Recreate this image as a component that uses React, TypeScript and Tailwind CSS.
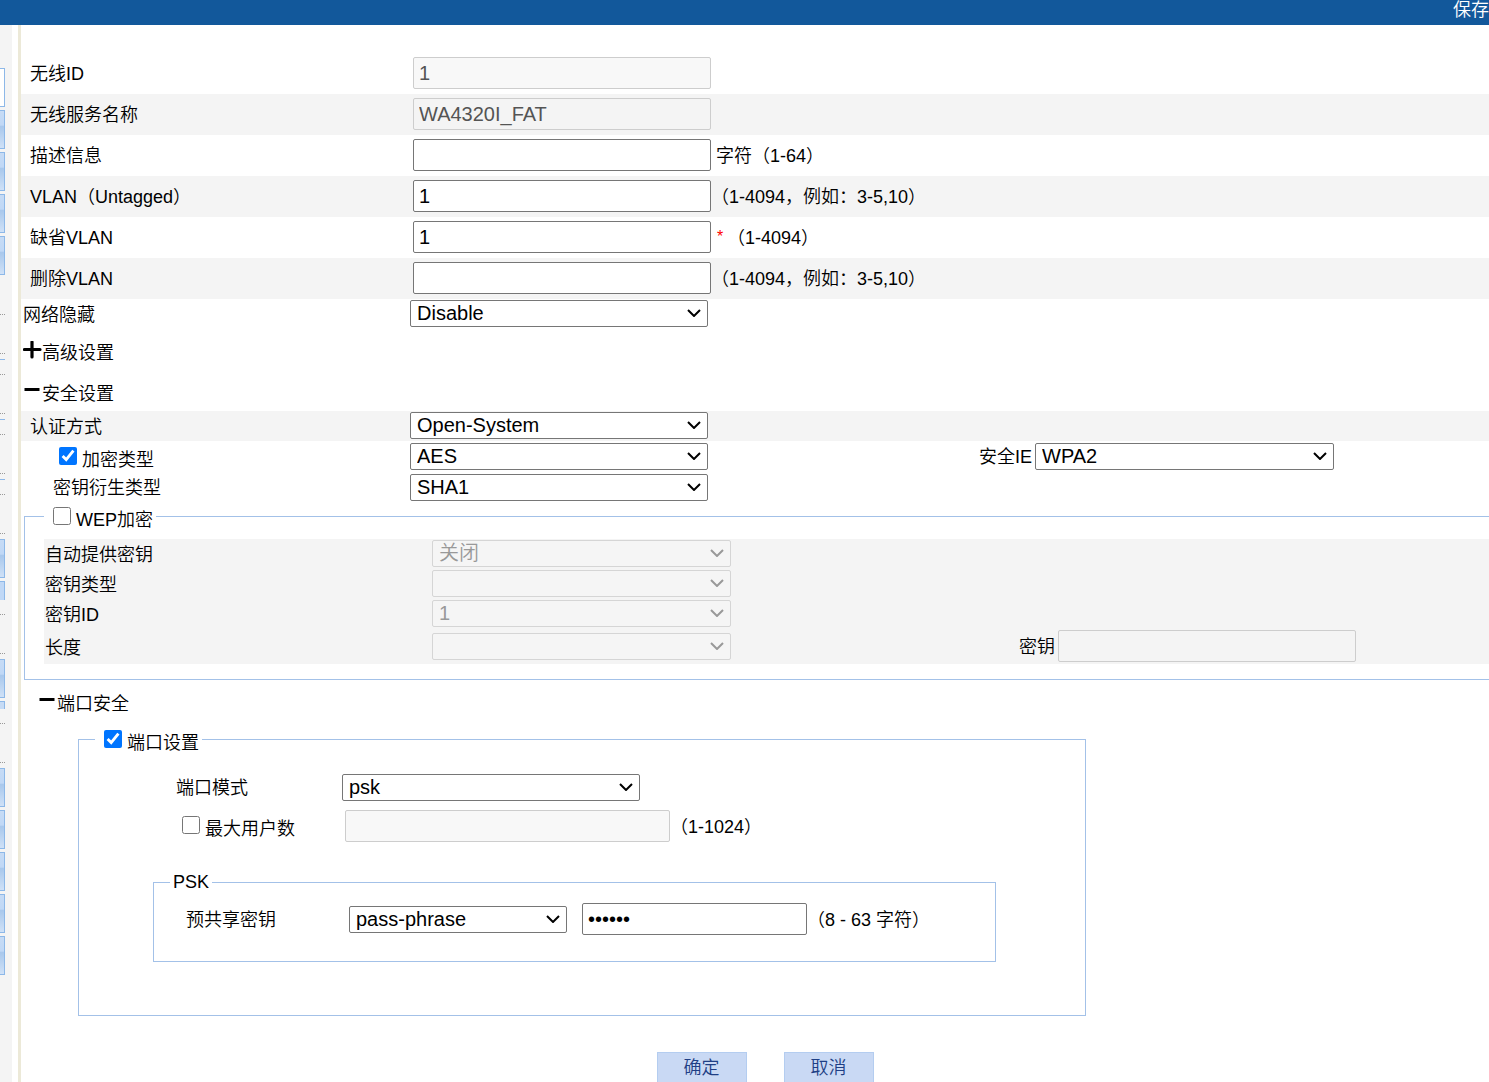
import { useState } from 'react';
import type { ReactNode } from 'react';

const inputBase =
  'h-8 shrink-0 rounded-xs border px-[5px] text-[20px] outline-none border-[#767676] text-black disabled:border-[#cdcdcd] disabled:text-[#545454]';
const onWhite = 'bg-white disabled:bg-[#f8f8f8]';
const onGrey = 'bg-white disabled:bg-[#f4f4f4]';

/* ─── Small building blocks ─── */

type SelectProps = {
  id: string;
  options: string[];
  width?: string;
  disabled?: boolean;
  label?: string;
};

function Select({ id, options, width = 'w-[298px]', disabled, label }: SelectProps) {
  return (
    <div className={`relative shrink-0 ${width}`}>
      <select
        id={id}
        aria-label={label}
        disabled={disabled}
        className="block h-[27px] w-full appearance-none rounded-xs border border-[#767676] bg-white pr-6 pl-[6px] text-[20px] leading-[25px] text-black disabled:border-[#d5d5d5] disabled:bg-[#f5f5f5] disabled:text-[#999999] disabled:opacity-100"
      >
        {options.map(o => <option key={o}>{o}</option>)}
      </select>
      <svg
        viewBox="0 0 14 8"
        className={`pointer-events-none absolute top-[9px] right-[7px] h-2 w-[14px] ${disabled ? 'text-[#999999]' : 'text-black'}`}
        fill="none"
        stroke="currentColor"
        strokeWidth="2"
      >
        <path d="M1 1 L7 7 L13 1" />
      </svg>
    </div>
  );
}

function Check({ id, label, defaultChecked }: { id: string; label: string; defaultChecked?: boolean }) {
  const [checked, setChecked] = useState(!!defaultChecked);
  return (
    <span className="flex items-start gap-[5px]">
      <input
        id={id}
        type="checkbox"
        className="size-[18px] shrink-0"
        checked={checked}
        onChange={e => setChecked(e.target.checked)}
      />
      <label htmlFor={id} className="pt-1 leading-[18px]">{label}</label>
    </span>
  );
}

function Toggle({ open, children }: { open?: boolean; children: ReactNode }) {
  return (
    <button type="button" className="flex items-start" aria-expanded={!!open}>
      <svg viewBox="0 0 19 19" className="size-[19px]" stroke="#000" strokeWidth="3">
        {open ? <path d="M1.5 7.5 H16.5" /> : <path d="M1.5 8.5 H17 M9 1 V16" strokeWidth="3.2" strokeLinecap="round" />}
      </svg>
      <span className="pt-[3px] leading-[18px]">{children}</span>
    </button>
  );
}

function Row({ id, label, striped, children }: { id: string; label: string; striped?: boolean; children: ReactNode }) {
  return (
    <div className={`flex h-[41px] items-center pb-px ${striped ? 'bg-[#f4f4f4]' : ''}`}>
      <label htmlFor={id} className="w-[392px] shrink-0 pt-px pl-[9px]">{label}</label>
      {children}
    </div>
  );
}

function WepRow({ id, label, options, tall, children }: { id: string; label: string; options: string[]; tall?: boolean; children?: ReactNode }) {
  return (
    <div className={`flex items-center bg-[#f4f4f4] pb-px ${tall ? 'h-[35px]' : 'h-[30px]'}`}>
      <label htmlFor={id} className="w-[388px] shrink-0 pt-[3px] pl-px">{label}</label>
      <Select id={id} options={options} width="w-[299px]" disabled />
      {children}
    </div>
  );
}

/* ─── Sidebar edge ─── */

const navItem = 'h-[39px] shrink-0 border border-l-0 border-[#8db8e8] bg-[linear-gradient(#c6dbf5_0%,#c0d8f6_38%,#a9c8ec_42%,#cfe1f7_100%)]';
const navBox = 'h-10 shrink-0 border-y border-dotted border-[#999999]';
const navLine = 'mt-[5px] mb-[14px] h-px shrink-0 bg-[#8db8e8]';

function Sidebar() {
  return (
    <aside className="flex w-3 shrink-0 flex-col bg-[#f4f4f4] pt-[43px] pr-[7px]">
      <div className="flex flex-col gap-[3px]">
        <div className="h-[39px] border border-l-0 border-[#8db8e8] bg-white" />
        {[1, 2, 3, 4].map(n => <div key={n} className={navItem} />)}
      </div>
      <div className="mt-[39px] flex flex-col">
        {[1, 2, 3].map(n => (
          <div key={n}>
            <div className={navBox} />
            <div className={navLine} />
          </div>
        ))}
        <div className={navBox} />
      </div>
      <div className={`mt-[5px] ${navItem}`} />
      <div className="mt-[3px] mb-[14px] h-[19px] border-t border-r border-[#8db8e8] bg-[#c0d8f6]" />
      <div className={navBox} />
      <div className={`mt-[5px] ${navItem}`} />
      <div className="mt-[3px] mb-[14px] h-2 border-t border-r border-[#8db8e8] bg-[#c6dbf5]" />
      <div className={navBox} />
      <div className="mt-[5px] flex flex-col gap-[3px]">
        {[1, 2, 3, 4, 5].map(n => <div key={n} className={navItem} />)}
      </div>
    </aside>
  );
}

export default function App() {
  return (
    <div className="flex min-h-screen flex-col overflow-hidden bg-white font-['Liberation_Sans','Noto_Sans_CJK_SC',sans-serif] text-[18px] leading-[22px] font-[350] text-black">
      <header className="flex h-[25px] shrink-0 justify-end bg-[#12589b]">
        <a href="#save" className="h-5 leading-5 whitespace-nowrap text-white">保存</a>
      </header>

      <div className="flex grow">
        <Sidebar />

        <main className="ml-[6px] min-w-0 grow border-l-[3px] border-[#ece9d8] pt-7">
          <form onSubmit={e => e.preventDefault()}>
            {/* Basic settings */}
            <Row id="wid" label="无线ID">
              <input id="wid" className={`${inputBase} ${onWhite} w-[298px]`} defaultValue="1" disabled />
            </Row>
            <Row id="ssid" label="无线服务名称" striped>
              <input id="ssid" className={`${inputBase} ${onGrey} w-[298px]`} defaultValue="WA4320I_FAT" disabled />
            </Row>
            <Row id="desc" label="描述信息">
              <input id="desc" className={`${inputBase} ${onWhite} w-[298px]`} />
              <span className="pt-px pl-[5px]">字符（1-64）</span>
            </Row>
            <Row id="vlan" label="VLAN（Untagged）" striped>
              <input id="vlan" className={`${inputBase} ${onGrey} w-[298px]`} defaultValue="1" />
              <span className="pt-px">（1-4094，例如：3-5,10）</span>
            </Row>
            <Row id="pvid" label="缺省VLAN">
              <input id="pvid" className={`${inputBase} ${onWhite} w-[298px]`} defaultValue="1" />
              <span className="w-4 pl-[6px] text-base text-[#ff0000]">*</span>
              <span className="pt-px">（1-4094）</span>
            </Row>
            <Row id="delvlan" label="删除VLAN" striped>
              <input id="delvlan" className={`${inputBase} ${onGrey} w-[298px]`} />
              <span className="pt-px">（1-4094，例如：3-5,10）</span>
            </Row>
            <div className="flex h-[30px] items-center pb-px">
              <label htmlFor="hide" className="w-[389px] shrink-0 pt-[3px] pl-[2px]">网络隐藏</label>
              <Select id="hide" options={['Disable', 'Enable']} />
            </div>

            <div className="flex h-[41px] items-center pt-[3px] pl-[2px]">
              <Toggle>高级设置</Toggle>
            </div>
            <div className="flex h-[41px] items-center pt-[3px] pl-[2px]">
              <Toggle open>安全设置</Toggle>
            </div>

            {/* Security */}
            <div className="flex h-[30px] items-center bg-[#f4f4f4] pb-px">
              <label htmlFor="auth" className="w-[389px] shrink-0 pt-[3px] pl-[9px]">认证方式</label>
              <Select id="auth" options={['Open-System', 'Shared-Key']} />
            </div>
            <div className="flex h-[31px] items-center">
              <div className="w-[389px] shrink-0 pt-[2px] pl-[38px]">
                <Check id="cipher" label="加密类型" defaultChecked />
              </div>
              <Select id="cipher-type" label="加密类型" options={['AES', 'TKIP']} />
              <label htmlFor="ie" className="ml-[271px] w-14 shrink-0">安全IE</label>
              <Select id="ie" options={['WPA2', 'WPA']} width="w-[299px]" />
            </div>
            <div className="flex h-[30px] items-center">
              <label htmlFor="akm" className="w-[389px] shrink-0 pt-[2px] pl-8">密钥衍生类型</label>
              <Select id="akm" options={['SHA1', 'SHA256']} />
            </div>

            {/* WEP */}
            <fieldset className="ml-[3px] border border-r-0 border-[#a3c1e8] pb-[15px] pl-[19px]">
              <legend className="flex h-7 items-start pt-[5px] pr-[3px] pl-[9px]">
                <Check id="wep" label="WEP加密" />
              </legend>
              <div className="pt-[9px]">
                <WepRow id="auto" label="自动提供密钥" options={['关闭', '开启']} />
                <WepRow id="ktype" label="密钥类型" options={['']} />
                <WepRow id="kid" label="密钥ID" options={['1', '2', '3', '4']} />
                <WepRow id="klen" label="长度" options={['']} tall>
                  <label htmlFor="key" className="ml-[288px] w-[39px] shrink-0 pt-px">密钥</label>
                  <input id="key" className={`${inputBase} ${onGrey} w-[298px]`} disabled />
                </WepRow>
              </div>
            </fieldset>

            <div className="flex h-[45px] items-center pl-[17px]">
              <Toggle open>端口安全</Toggle>
            </div>

            {/* Port security */}
            <fieldset className="mx-[57px] max-w-[1008px] border border-[#a3c1e8] pb-[53px] pl-4">
              <legend className="flex h-7 items-start pt-[5px] pr-[3px] pl-[9px]">
                <Check id="port" label="端口设置" defaultChecked />
              </legend>
              <div className="flex flex-col pt-[21px] pl-[81px]">
                <div className="flex items-center">
                  <label htmlFor="mode" className="w-[166px] shrink-0">端口模式</label>
                  <Select id="mode" options={['psk', 'mac-authentication']} />
                </div>
                <div className="mt-[9px] flex items-center">
                  <div className="w-[169px] shrink-0 pt-[2px] pl-[6px]">
                    <Check id="max" label="最大用户数" />
                  </div>
                  <input aria-label="最大用户数" className={`${inputBase} ${onWhite} w-[325px]`} disabled />
                  <span className="pt-px">（1-1024）</span>
                </div>
              </div>

              <fieldset className="mt-[29px] mr-[89px] ml-[58px] border border-[#a3c1e8] pb-[26px] pl-4">
                <legend className="px-[3px]">PSK</legend>
                <div className="flex items-center pt-[10px] pl-4">
                  <label htmlFor="psk" className="w-[163px] shrink-0 pt-px">预共享密钥</label>
                  <Select id="psk" options={['pass-phrase', 'raw-key']} width="w-[218px]" />
                  <input
                    type="password"
                    aria-label="预共享密钥"
                    defaultValue="123456"
                    className={`${inputBase} ${onWhite} ml-[15px] w-[225px]`}
                  />
                  <span className="pt-px">（8 - 63 字符）</span>
                </div>
              </fieldset>
            </fieldset>

            {/* Actions */}
            <div className="mt-9 flex justify-center gap-[37px] pl-5">
              <button type="submit" className="h-[30px] w-[90px] border border-b-0 border-[#b4cdf0] bg-[#c9d9f4] text-[#1f3f85]">确定</button>
              <button type="button" className="h-[30px] w-[90px] border border-b-0 border-[#b4cdf0] bg-[#c9d9f4] text-[#1f3f85]">取消</button>
            </div>
          </form>
        </main>
      </div>
    </div>
  );
}
